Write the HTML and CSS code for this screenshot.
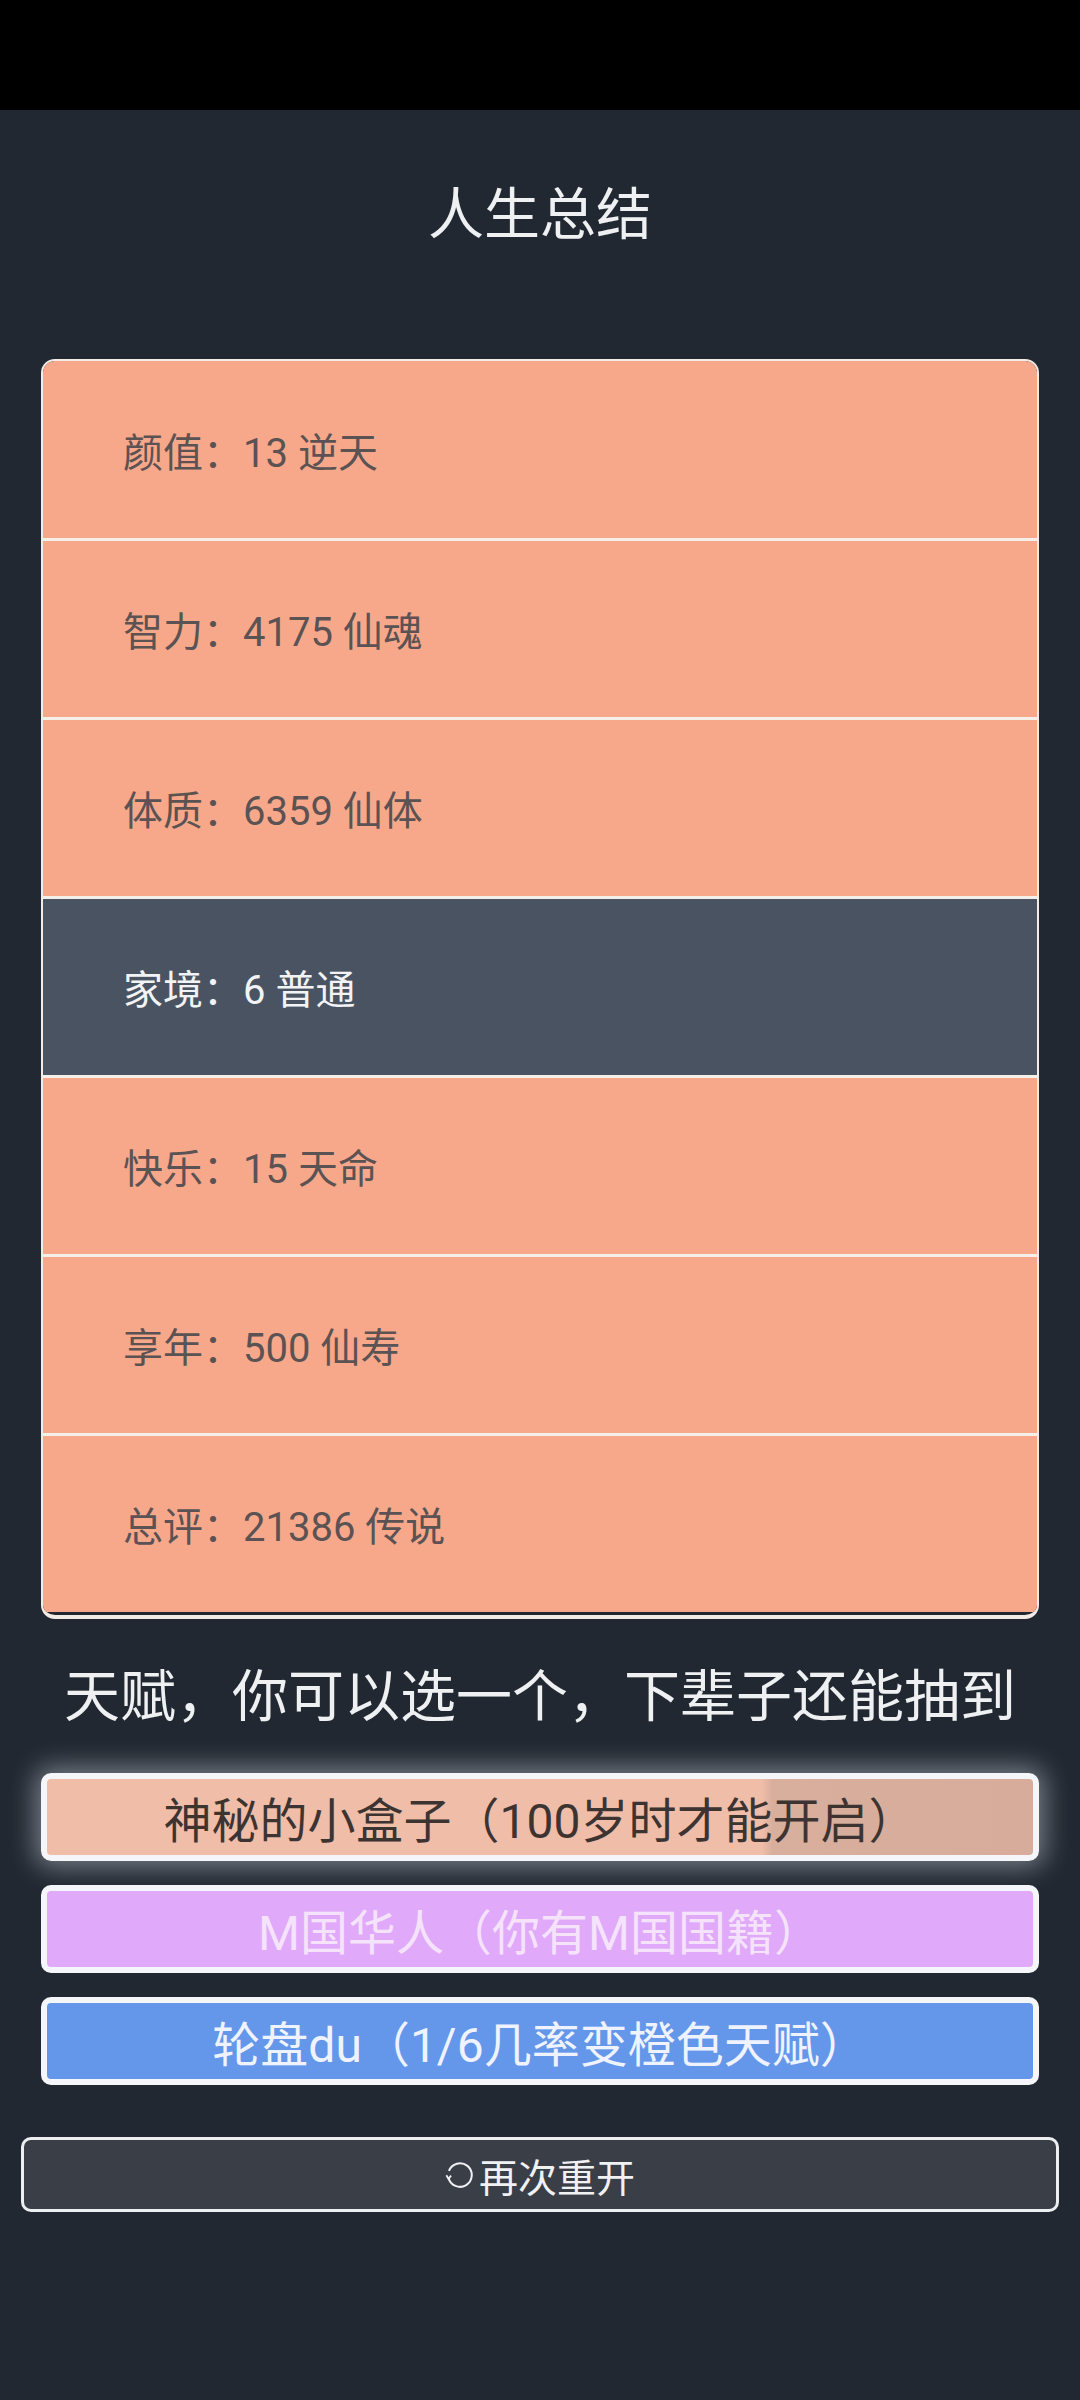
FILE: index.html
```html
<!DOCTYPE html>
<html lang="zh-CN">
<head>
<meta charset="utf-8">
<title>人生总结</title>
<link rel="stylesheet" href="styles.css">
</head>
<body>
<div class="statusbar"></div>
<main class="page">
  <h1 class="title">人生总结</h1>
  <ul class="summary">
    <li class="row">颜值：13 逆天</li>
    <li class="row">智力：4175 仙魂</li>
    <li class="row">体质：6359 仙体</li>
    <li class="row row-dark">家境：6 普通</li>
    <li class="row">快乐：15 天命</li>
    <li class="row">享年：500 仙寿</li>
    <li class="row">总评：21386 传说</li>
  </ul>
  <h2 class="subtitle">天赋，你可以选一个，下辈子还能抽到</h2>
  <ul class="talents">
    <li class="talent talent-orange">神秘的小盒子（100岁时才能开启）</li>
    <li class="talent talent-purple">M国华人（你有M国国籍）</li>
    <li class="talent talent-blue">轮盘du（1/6几率变橙色天赋）</li>
  </ul>
  <button class="restart" type="button"><svg class="restart-icon" viewBox="0 0 26 28" width="28" height="30"><path d="M3.2 16.5 A11 11 0 1 0 3.6 10.2" fill="none" stroke="#eef0f3" stroke-width="1.9"/><path d="M1.2 14.2 L3.2 17.6 L5.6 14.6" fill="none" stroke="#eef0f3" stroke-width="1.7"/></svg><span>再次重开</span></button>
</main>
</body>
</html>
```
FILE: styles.css
```css
html, body {
  margin: 0;
  padding: 0;
}
body {
  background: #222831;
  font-family: "Roboto", "Noto Sans CJK SC", sans-serif;
  color: #eef0f2;
  min-height: 2400px;
}
.statusbar {
  height: 110px;
  background: #000;
}
.page {
  display: flex;
  flex-direction: column;
}
.title {
  margin: 67px 0 0;
  height: 77px;
  font-size: 56px;
  line-height: 77px;
  font-weight: 400;
  text-align: center;
  color: #eef0f2;
}
.summary {
  list-style: none;
  margin: 105px 41px 0;
  padding: 0 0 3px;
  border: 2px solid #f3ece6;
  border-bottom-width: 4px;
  border-radius: 14px;
  background: #222831;
  overflow: hidden;
  display: flex;
  flex-direction: column;
}
.row {
  height: 176px;
  display: flex;
  align-items: center;
  padding-left: 80px;
  background: #f7a88a;
  color: #5b5254;
  font-size: 40px;
  border-top: 3px solid #f5efea;
}
.row:first-child {
  border-top: 0;
  height: 177px;
}
.row-dark {
  background: #4a5362;
  color: #f2f3f5;
}
.subtitle {
  margin: 40px 0 0;
  height: 77px;
  font-size: 56px;
  line-height: 77px;
  font-weight: 400;
  text-align: center;
  color: #eef0f2;
}
.talents {
  list-style: none;
  margin: 37px 41px 0;
  padding: 0;
  display: flex;
  flex-direction: column;
  gap: 24px;
}
.talent {
  height: 88px;
  box-sizing: border-box;
  border: 6px solid #f4f6f9;
  border-radius: 10px;
  display: flex;
  align-items: center;
  justify-content: center;
  font-size: 48px;
}
.talent-orange {
  background: linear-gradient(90deg, #f0bda9 0%, #f0bda9 72.5%, #d8ae9c 73.6%, #d7ac9a 100%);
  color: #3d3432;
  box-shadow: 0 0 26px 6px rgba(225, 230, 240, 0.45);
}
.talent-purple {
  background: #e1a9fa;
  color: #f4e3fb;
}
.talent-blue {
  background: #6496ea;
  color: #eef3ff;
}
.restart {
  margin: 52px 21px 0;
  height: 75px;
  box-sizing: border-box;
  border: 3px solid #eceef2;
  border-radius: 10px;
  background: #3a3e47;
  color: #f0f1f3;
  font-family: "Roboto", "Noto Sans CJK SC", sans-serif;
  font-size: 39px;
  display: flex;
  align-items: center;
  justify-content: center;
  gap: 6px;
  padding: 0;
}
.restart-icon {
  display: block;
}
```
